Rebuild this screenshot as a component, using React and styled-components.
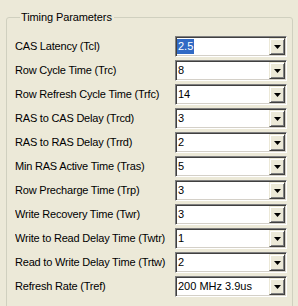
import React from "react";
import styled, { createGlobalStyle } from "styled-components";

const GlobalStyle = createGlobalStyle`
  html, body {
    margin: 0;
    padding: 0;
    background: #ece9d8;
  }
  body {
    font-family: "Liberation Sans", Arial, sans-serif;
    font-size: 11px;
    color: #000;
  }
`;

const Page = styled.div`
  width: 298px;
  height: 306px;
  box-sizing: border-box;
  padding: 11px 5px 0 6px;
  overflow: hidden;
`;

const Group = styled.fieldset`
  margin: 0;
  padding: 0 5px 20px 8px;
  border: 1px solid #d0d0bf;
  border-radius: 3px;
`;

const Legend = styled.legend`
  margin-left: 5px;
  padding: 0 2px 0 1px;
  line-height: 13px;
  font-size: 11px;
  letter-spacing: -0.1px;
`;

const Rows = styled.div`
  display: grid;
  grid-template-columns: 1fr 112px;
  row-gap: 3px;
  align-items: center;
  padding-top: 12px;
`;

const Label = styled.label`
  white-space: nowrap;
  overflow: hidden;
  line-height: 21px;
  letter-spacing: -0.2px;
`;

const Combo = styled.div`
  position: relative;
  box-sizing: border-box;
  height: 21px;
  display: flex;
  align-items: center;
  background: #fff;
  border: 1px solid;
  border-color: #808080 #fff #fff #808080;
  box-shadow: inset 1px 1px 0 #404040, inset -1px -1px 0 #d4d0c8;
  padding: 0 19px 0 1px;
`;

const Value = styled.span`
  padding: 0 1px;
  line-height: 15px;
  background: ${(p) => (p.$selected ? "#316ac5" : "transparent")};
  color: ${(p) => (p.$selected ? "#fff" : "#000")};
`;

const ArrowButton = styled.div`
  position: absolute;
  top: 1px;
  right: 1px;
  bottom: 1px;
  width: 16px;
  box-sizing: border-box;
  display: flex;
  align-items: center;
  justify-content: center;
  background: #ece9d8;
  border: 1px solid;
  border-color: #ece9d8 #404040 #404040 #ece9d8;
  box-shadow: inset 1px 1px 0 #fff, inset -1px -1px 0 #808080;
`;

const Arrow = () => (
  <svg width="7" height="4" viewBox="0 0 7 4">
    <path d="M0 0h7L3.5 4z" fill="#000" />
  </svg>
);

const params = [
  ["CAS Latency (Tcl)", "2.5", true],
  ["Row Cycle Time (Trc)", "8"],
  ["Row Refresh Cycle Time (Trfc)", "14"],
  ["RAS to CAS Delay (Trcd)", "3"],
  ["RAS to RAS Delay (Trrd)", "2"],
  ["Min RAS Active Time (Tras)", "5"],
  ["Row Precharge Time (Trp)", "3"],
  ["Write Recovery Time (Twr)", "3"],
  ["Write to Read Delay Time (Twtr)", "1"],
  ["Read to Write Delay Time (Trtw)", "2"],
  ["Refresh Rate (Tref)", "200 MHz 3.9us"],
];

export default function App() {
  return (
    <>
      <GlobalStyle />
      <Page>
        <Group>
          <Legend>Timing Parameters</Legend>
          <Rows>
            {params.map(([label, value, selected]) => (
              <React.Fragment key={label}>
                <Label>{label}</Label>
                <Combo>
                  <Value $selected={selected}>{value}</Value>
                  <ArrowButton>
                    <Arrow />
                  </ArrowButton>
                </Combo>
              </React.Fragment>
            ))}
          </Rows>
        </Group>
      </Page>
    </>
  );
}
